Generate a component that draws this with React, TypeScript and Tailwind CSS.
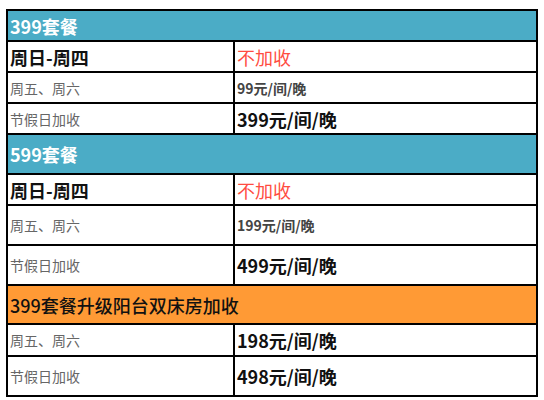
const font = { fontFamily: '"Microsoft YaHei", "Noto Sans CJK SC", sans-serif' }

type Row =
  | { kind: 'head'; text: string; color: 'blue' | 'orange'; h: string }
  | { kind: 'row'; label: string; labelBig?: boolean; value: string; valueStyle: 'red' | 'big' | 'small'; h: string }

const rows: Row[] = [
  { kind: 'head', text: '399套餐', color: 'blue', h: 'h-[31px]' },
  { kind: 'row', label: '周日-周四', labelBig: true, value: '不加收', valueStyle: 'red', h: 'h-[31px]' },
  { kind: 'row', label: '周五、周六', value: '99元/间/晚', valueStyle: 'small', h: 'h-[31px]' },
  { kind: 'row', label: '节假日加收', value: '399元/间/晚', valueStyle: 'big', h: 'h-[31px]' },
  { kind: 'head', text: '599套餐', color: 'blue', h: 'h-[40px]' },
  { kind: 'row', label: '周日-周四', labelBig: true, value: '不加收', valueStyle: 'red', h: 'h-[31px]' },
  { kind: 'row', label: '周五、周六', value: '199元/间/晚', valueStyle: 'small', h: 'h-[40px]' },
  { kind: 'row', label: '节假日加收', value: '499元/间/晚', valueStyle: 'big', h: 'h-[40px]' },
  { kind: 'head', text: '399套餐升级阳台双床房加收', color: 'orange', h: 'h-[39px]' },
  { kind: 'row', label: '周五、周六', value: '198元/间/晚', valueStyle: 'big', h: 'h-[32px]' },
  { kind: 'row', label: '节假日加收', value: '498元/间/晚', valueStyle: 'big', h: 'h-[40px]' },
]

const valueClass = {
  red: 'text-[18px] text-[#ff4c41]',
  big: 'text-[18px] font-bold text-[#111]',
  small: 'text-[14px] font-bold text-[#444]',
}

export default function App() {
  return (
    <div className="w-[544px] h-[400px] bg-white pt-[9px] pl-[6px]" style={font}>
      <table className="w-[532px] table-fixed border-collapse border-2 border-black">
        <colgroup>
          <col className="w-[227px]" />
          <col />
        </colgroup>
        <tbody>
          {rows.map((r, i) =>
            r.kind === 'head' ? (
              <tr key={i} className={r.h}>
                <td
                  colSpan={2}
                  className={
                    r.color === 'blue'
                      ? 'border-2 border-black bg-[#4bacc6] px-[2px] align-middle text-[18px] font-bold leading-none text-white'
                      : 'border-2 border-black bg-[#ff9a35] px-[2px] align-middle text-[18px] font-medium leading-none text-[#111]'
                  }
                >
                  {r.text}
                </td>
              </tr>
            ) : (
              <tr key={i} className={r.h}>
                <td
                  className={
                    r.labelBig
                      ? 'border-2 border-black px-[2px] align-middle text-[18px] font-bold leading-none text-[#111]'
                      : 'border-2 border-black px-[2px] align-middle text-[14px] leading-none text-[#666]'
                  }
                >
                  {r.label}
                </td>
                <td className={'border-2 border-black px-[2px] align-middle leading-none ' + valueClass[r.valueStyle]}>
                  {r.value}
                </td>
              </tr>
            )
          )}
        </tbody>
      </table>
    </div>
  )
}
